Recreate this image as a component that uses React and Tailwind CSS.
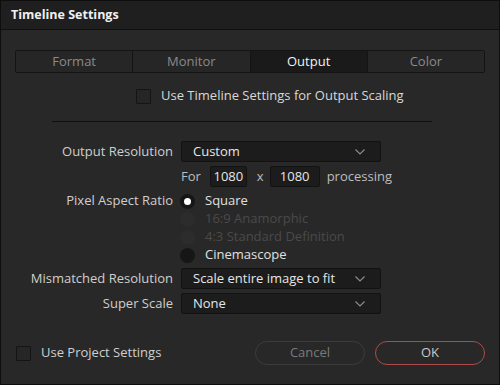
import { useState } from "react";

const Chevron = () => (
  <svg width="12" height="8" viewBox="0 0 12 8" fill="none" className="shrink-0">
    <path d="M1.5 1.5 L6 6 L10.5 1.5" stroke="#8c8c8c" strokeWidth="1.2" />
  </svg>
);

const Select = ({ value }) => (
  <div className="w-[200px] h-[21px] flex items-center justify-between pl-[11px] pr-[14px] bg-[#1c1c1c] border border-[#121212] rounded-[2px] text-[#e6e6e6]">
    <span>{value}</span>
    <Chevron />
  </div>
);

const Radio = ({ checked, disabled, label }) => (
  <div className="flex items-center gap-[10px] h-[18px]">
    <div
      className={`w-[15px] h-[15px] rounded-full flex items-center justify-center ${
        disabled ? "bg-[#2c2c2c]" : "bg-[#161616]"
      }`}
    >
      {checked && <div className="w-[7px] h-[7px] rounded-full bg-white" />}
    </div>
    <span className={disabled ? "text-[#4a4a4a]" : "text-[#e0e0e0]"}>{label}</span>
  </div>
);

const Checkbox = () => (
  <div className="w-[15px] h-[15px] bg-[#262626] border border-[#141414] rounded-[1px]" />
);

export default function App() {
  const [tab] = useState("Output");
  const tabs = ["Format", "Monitor", "Output", "Color"];

  return (
    <div
      className="w-[500px] h-[385px] bg-[#282828] border border-[#0e0e0e] flex flex-col text-[13px] text-[#cfcfcf]"
      style={{ fontFamily: '"Open Sans", "Noto Sans", sans-serif' }}
    >
      <div className="h-[29px] bg-[#1f1f1f] border-b border-[#101010] flex items-center pl-[10px] shrink-0">
        <span className="font-bold text-[12.5px] text-[#f0f0f0]">Timeline Settings</span>
      </div>

      <div className="flex-1 flex flex-col px-[14px] pt-[20px]">
        <div className="flex h-[23px] border border-[#141414] rounded-[2px]">
          {tabs.map((t, i) => (
            <div
              key={t}
              className={`flex-1 flex items-center justify-center ${
                i > 0 ? "border-l border-[#141414]" : ""
              } ${t === tab ? "bg-[#1a1a1a] text-[#f2f2f2]" : "bg-[#262626] text-[#8a8a8a]"}`}
            >
              {t}
            </div>
          ))}
        </div>

        <div className="flex items-center gap-[10px] ml-[121px] mt-[15px] h-[16px]">
          <Checkbox />
          <span className="text-[#d8d8d8]">Use Timeline Settings for Output Scaling</span>
        </div>

        <div className="ml-[37px] mr-[53px] mt-[17px] h-px bg-[#0f0f0f]" />

        <div className="grid grid-cols-[158px_1fr] gap-x-[8px] mt-[19px] items-center">
          <span className="text-right">Output Resolution</span>
          <Select value="Custom" />

          <span />
          <div className="flex items-center mt-[4px] h-[21px]">
            <span className="text-[#bdbdbd]">For</span>
            <div className="ml-[9px] w-[37px] h-[21px] flex items-center justify-center bg-[#1c1c1c] border border-[#121212] rounded-[2px] text-[#e6e6e6]">
              1080
            </div>
            <span className="ml-[10px] text-[#bdbdbd]">x</span>
            <div className="ml-[6px] w-[50px] h-[21px] flex items-center justify-center bg-[#1c1c1c] border border-[#121212] rounded-[2px] text-[#e6e6e6]">
              1080
            </div>
            <span className="ml-[7px] text-[#bdbdbd]">processing</span>
          </div>

          <span className="text-right self-start mt-[4px]">Pixel Aspect Ratio</span>
          <div className="flex flex-col mt-[5px] -ml-[1px]">
            <Radio checked label="Square" />
            <Radio disabled label="16:9 Anamorphic" />
            <Radio disabled label="4:3 Standard Definition" />
            <Radio label="Cinemascope" />
          </div>

          <span className="text-right mt-[4px]">Mismatched Resolution</span>
          <div className="mt-[4px]">
            <Select value="Scale entire image to fit" />
          </div>

          <span className="text-right mt-[4px]">Super Scale</span>
          <div className="mt-[4px]">
            <Select value="None" />
          </div>
        </div>

        <div className="flex items-center mt-[27px]">
          <div className="flex items-center gap-[10px] flex-1 pl-[1px]">
            <Checkbox />
            <span className="text-[#cfcfcf]">Use Project Settings</span>
          </div>
          <button className="w-[110px] h-[24px] rounded-full border border-[#3c3c3c] text-[#7a7a7a] bg-transparent">
            Cancel
          </button>
          <button className="ml-[10px] w-[110px] h-[24px] rounded-full border border-[#b04a4a] text-[#c8c8c8] bg-transparent">
            OK
          </button>
        </div>
      </div>
    </div>
  );
}
